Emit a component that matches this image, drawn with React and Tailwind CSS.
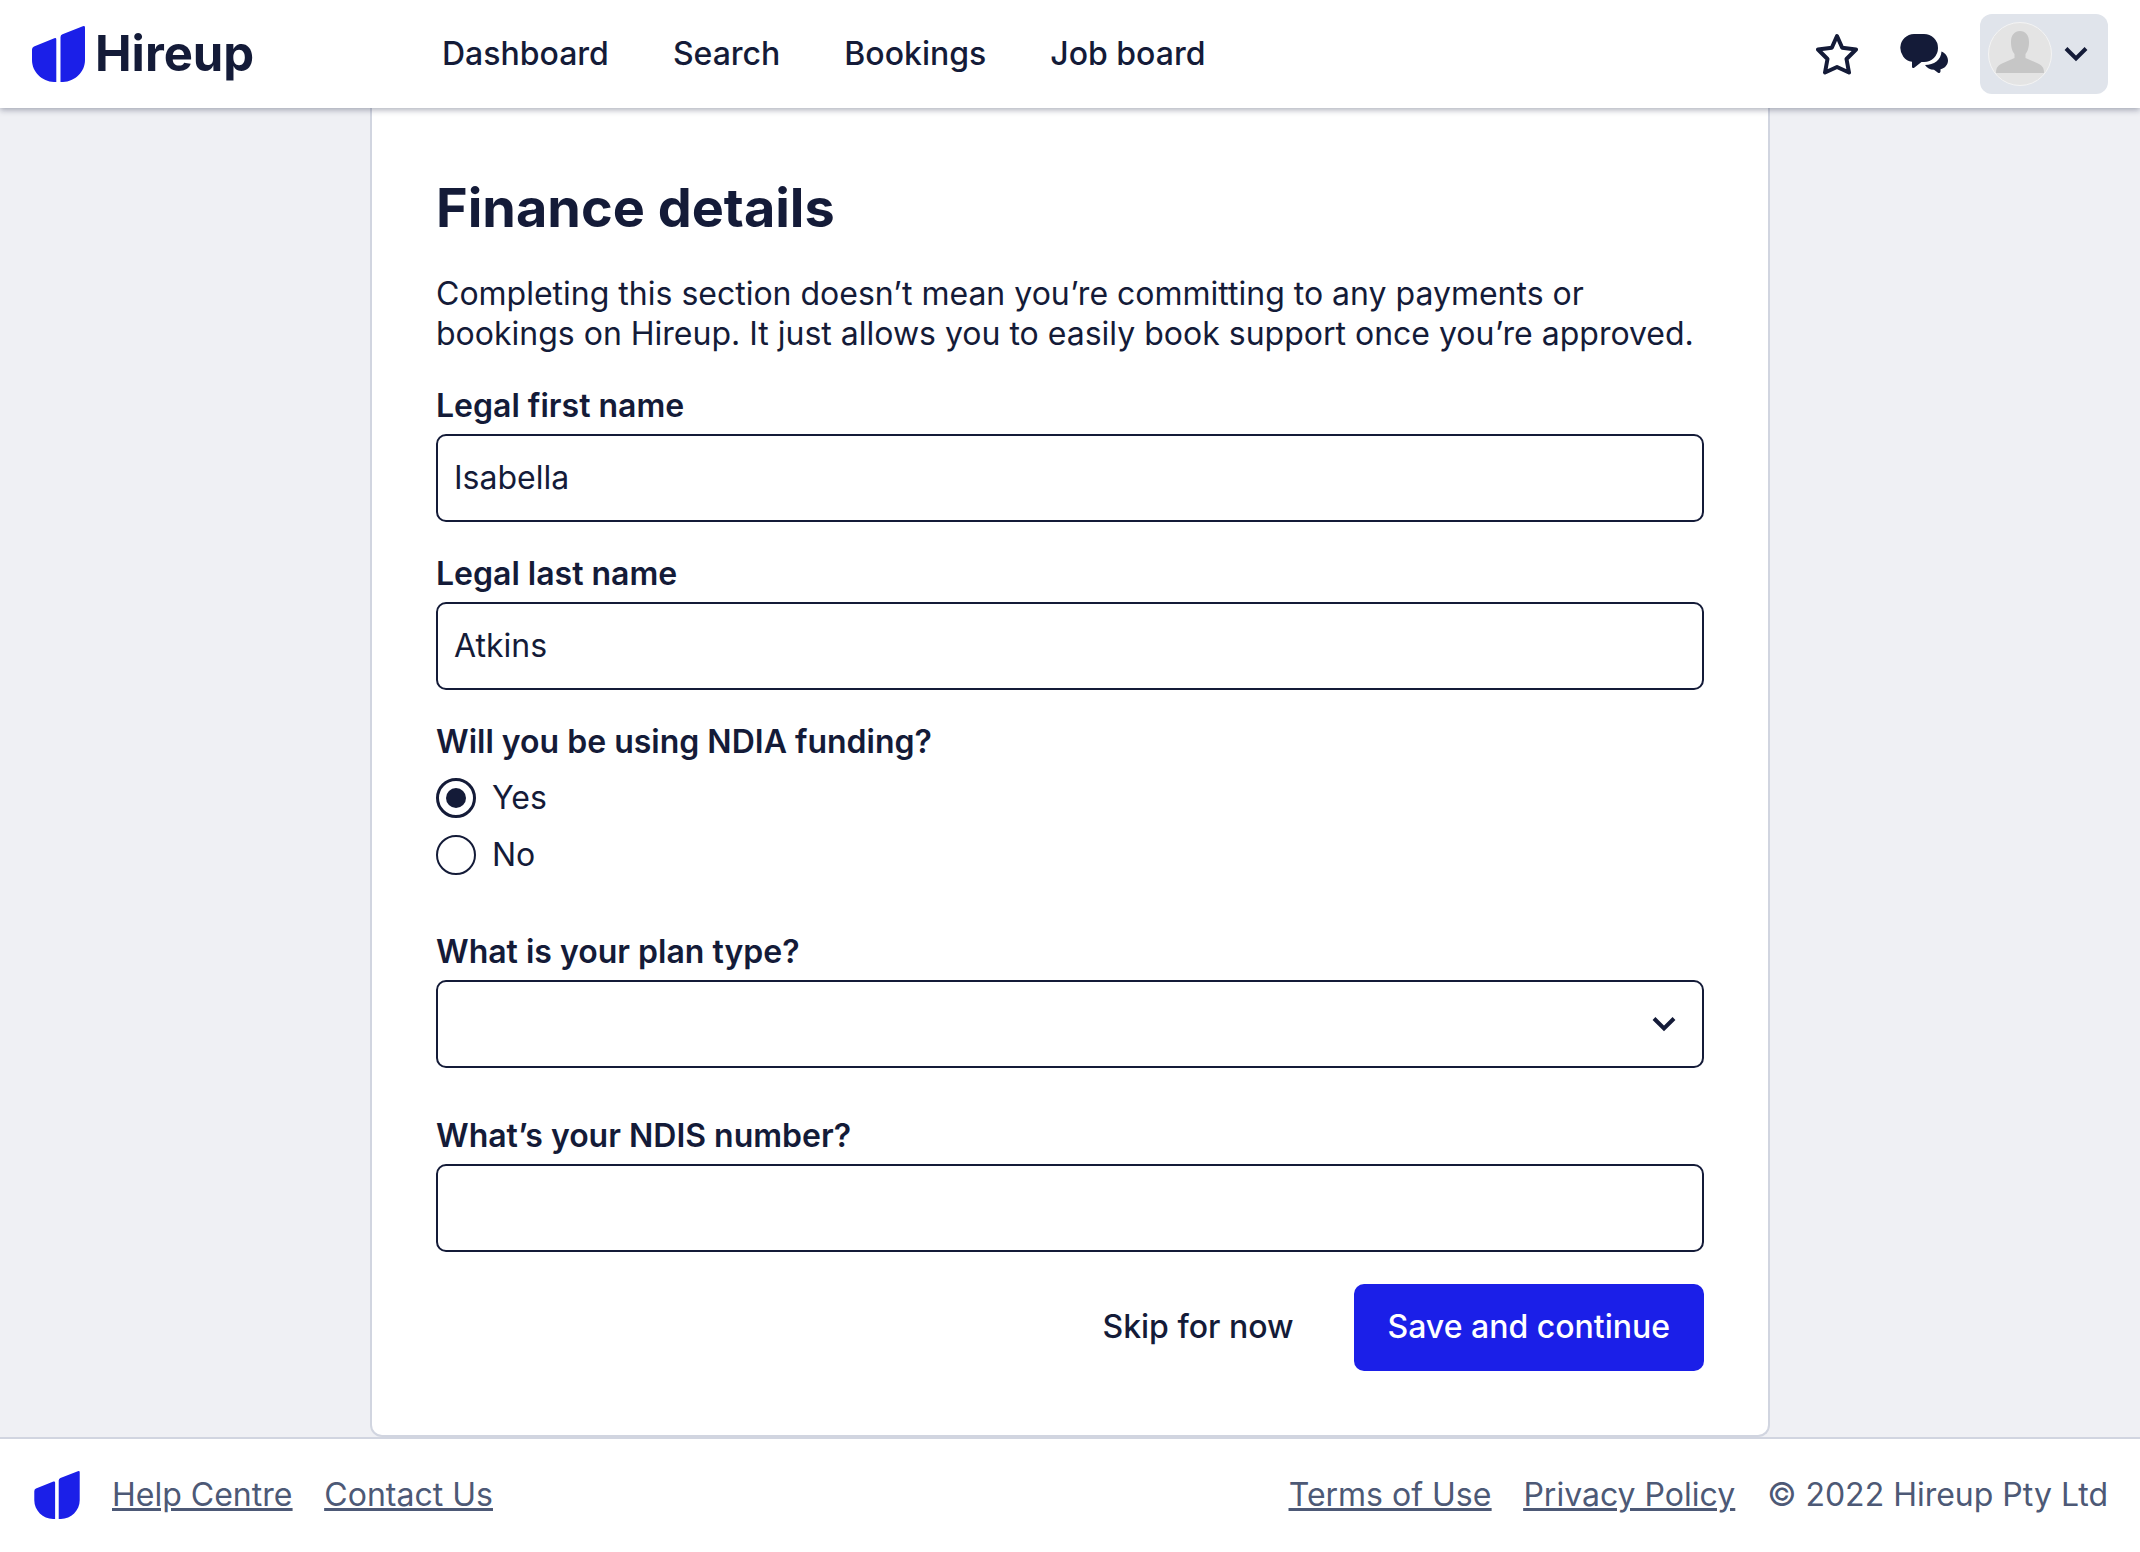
const FIELD =
  "block h-22 w-full rounded-[10px] border-2 border-[#141b38] bg-white px-4 pb-0.5 text-[32px] leading-10 text-[#141b38] outline-none";
const LABEL = "mb-2 block text-[32px] font-semibold leading-10";

function LogoMark({ className }) {
  return (
    <svg viewBox="0 0 53 56" className={className} aria-hidden="true">
      <path
        fill="#1b1fe8"
        d="M0 23.500Q0 21.200 2 20.400L22.300 12.300Q24.300 11.600 24.300 13.500V56H22C10 55.500 0 46 0 34ZM28.500 11Q28.500 9 30.500 8.200L50.800 .3Q53 -.4 53 1.500V34C53 46 43 55.500 31 56H28.500Z"
      />
    </svg>
  );
}

function Chevron({ className }) {
  return (
    <svg viewBox="0 0 24 16" className={className} aria-hidden="true" fill="none" stroke="#141b38" strokeWidth="4">
      <path d="M2 2.500 12 12.500 22 2.500" />
    </svg>
  );
}

function StarIcon() {
  return (
    <svg viewBox="0 0 42 42" className="size-[42px]" aria-hidden="true" fill="none" stroke="#141b38" strokeWidth="4" strokeLinejoin="round">
      <path d="M21 3 26.200 14.700 40 16.500 30.500 26 33 39.500 21 34 9 39.500 11.500 26 2 16.500 15.800 14.700Z" />
    </svg>
  );
}

function ChatIcon() {
  return (
    <svg viewBox="0 0 48 40" className="h-10 w-12" aria-hidden="true" fill="#141b38">
      <path d="M14 0H24A14 14 0 0 1 24 28H21.500L14.500 33.600Q12 35 12 32.500V27.800A14 14 0 0 1 14 0Z" />
      <path d="M41.500 17.500C46 19.500 48 23 48 26.500C48 30.500 45 34.500 40.500 35.200V37.500Q40 39.800 38 38.800L34 35.800C30 35.800 27 34 25 31C34 31 41 26 41.500 17.500Z" />
    </svg>
  );
}

function Avatar() {
  return (
    <svg viewBox="0 0 64 64" className="size-16" aria-hidden="true">
      <circle cx="32" cy="32" r="31.500" fill="#e4e4e4" stroke="#f4f4f4" />
      <path
        fill="#c6c6c6"
        d="M32 9C37.500 9 41 13 41 20C41 26 39.500 29.500 37.500 32V36L50 41.500C54 43.500 56 45.500 56 51H8C8 45.500 10 43.500 14 41.500L26.500 36V32C24.500 29.500 23 26 23 20C23 13 26.500 9 32 9Z"
      />
    </svg>
  );
}

function TextField({ id, label, value = "" }) {
  return (
    <div>
      <label htmlFor={id} className={LABEL}>{label}</label>
      <input id={id} type="text" defaultValue={value} className={FIELD} />
    </div>
  );
}

function Radio({ label, checked }) {
  return (
    <label className="flex items-center gap-4 text-[32px] leading-10">
      <input
        type="radio"
        name="ndia"
        defaultChecked={checked}
        className="grid size-10 appearance-none place-items-center rounded-full border-2 border-[#141b38] before:size-5 before:rounded-full checked:border-3 checked:before:bg-[#141b38]"
      />
      {label}
    </label>
  );
}

export default function App() {
  return (
    <div className="flex min-h-screen flex-col bg-[#eff0f4] font-['Inter',sans-serif] text-[#141b38]">
      <header className="relative flex h-27 items-center bg-white px-8 shadow-[0_2px_6px_rgba(20,27,56,0.35)]">
        <a href="#home" aria-label="Hireup" className="flex w-[410px] items-center gap-2.5">
          <LogoMark className="h-14 w-[53px]" />
          <span className="text-[49px] font-bold leading-14">Hireup</span>
        </a>
        <nav className="flex gap-16 text-[32px] font-medium leading-10">
          <a href="#dashboard">Dashboard</a>
          <a href="#search">Search</a>
          <a href="#bookings">Bookings</a>
          <a href="#jobs">Job board</a>
        </nav>
        <div className="ml-auto flex items-center">
          <button type="button" aria-label="Favourites" className="mr-[42px]"><StarIcon /></button>
          <button type="button" aria-label="Messages" className="mr-8"><ChatIcon /></button>
          <button type="button" aria-label="Account menu" className="flex h-20 w-32 items-center gap-3 rounded-xl bg-[#e0e4eb] pl-2">
            <Avatar />
            <Chevron className="h-4 w-6" />
          </button>
        </div>
      </header>

      <main className="mx-auto w-full max-w-[1400px] rounded-b-xl border-2 border-t-0 border-[#d1d5e0] bg-white px-16 pb-16 pt-17">
        <h1 className="text-[54px] font-bold leading-16">Finance details</h1>
        <p className="mt-[34px] text-[32px] leading-10">
          Completing this section doesn’t mean you’re committing to any payments or bookings on Hireup. It just allows you to easily book support once you’re approved.
        </p>
        <form className="mt-8" onSubmit={(e) => e.preventDefault()}>
          <div className="flex flex-col gap-8">
            <TextField id="first" label="Legal first name" value="Isabella" />
            <TextField id="last" label="Legal last name" value="Atkins" />
            <fieldset>
              <legend className="mb-4 text-[32px] font-semibold leading-10">Will you be using NDIA funding?</legend>
              <div className="flex flex-col gap-[17px]">
                <Radio label="Yes" checked />
                <Radio label="No" />
              </div>
            </fieldset>
          </div>
          <div className="mt-[57px] flex flex-col gap-12">
            <div>
              <label htmlFor="plan" className={LABEL}>What is your plan type?</label>
              <div className="relative">
                <select id="plan" defaultValue="" className={FIELD + " appearance-none"}>
                  <option value=""></option>
                </select>
                <Chevron className="pointer-events-none absolute right-7 top-9 h-4 w-6" />
              </div>
            </div>
            <TextField id="ndis" label="What’s your NDIS number?" />
          </div>
          <div className="mt-8 flex justify-end gap-6">
            <button type="button" className="px-9 pb-0.5 text-[32px] font-medium leading-10">Skip for now</button>
            <button type="submit" className="h-[87px] rounded-[10px] bg-[#1b1fe8] px-[34px] pb-0.5 text-[32px] font-medium leading-10 text-white">Save and continue</button>
          </div>
        </form>
      </main>

      <footer className="flex flex-1 items-center border-t-2 border-[#d1d5e0] bg-white pb-0.5 pl-[34px] pr-8 text-[32px] leading-10 text-[#4d5976]">
        <LogoMark className="mr-8 h-12 w-[46px]" />
        <nav className="flex gap-8 underline">
          <a href="#help">Help Centre</a>
          <a href="#contact">Contact Us</a>
        </nav>
        <nav className="ml-auto flex gap-8 underline">
          <a href="#terms">Terms of Use</a>
          <a href="#privacy">Privacy Policy</a>
        </nav>
        <span className="ml-8">© 2022 Hireup Pty Ltd</span>
      </footer>
    </div>
  );
}
